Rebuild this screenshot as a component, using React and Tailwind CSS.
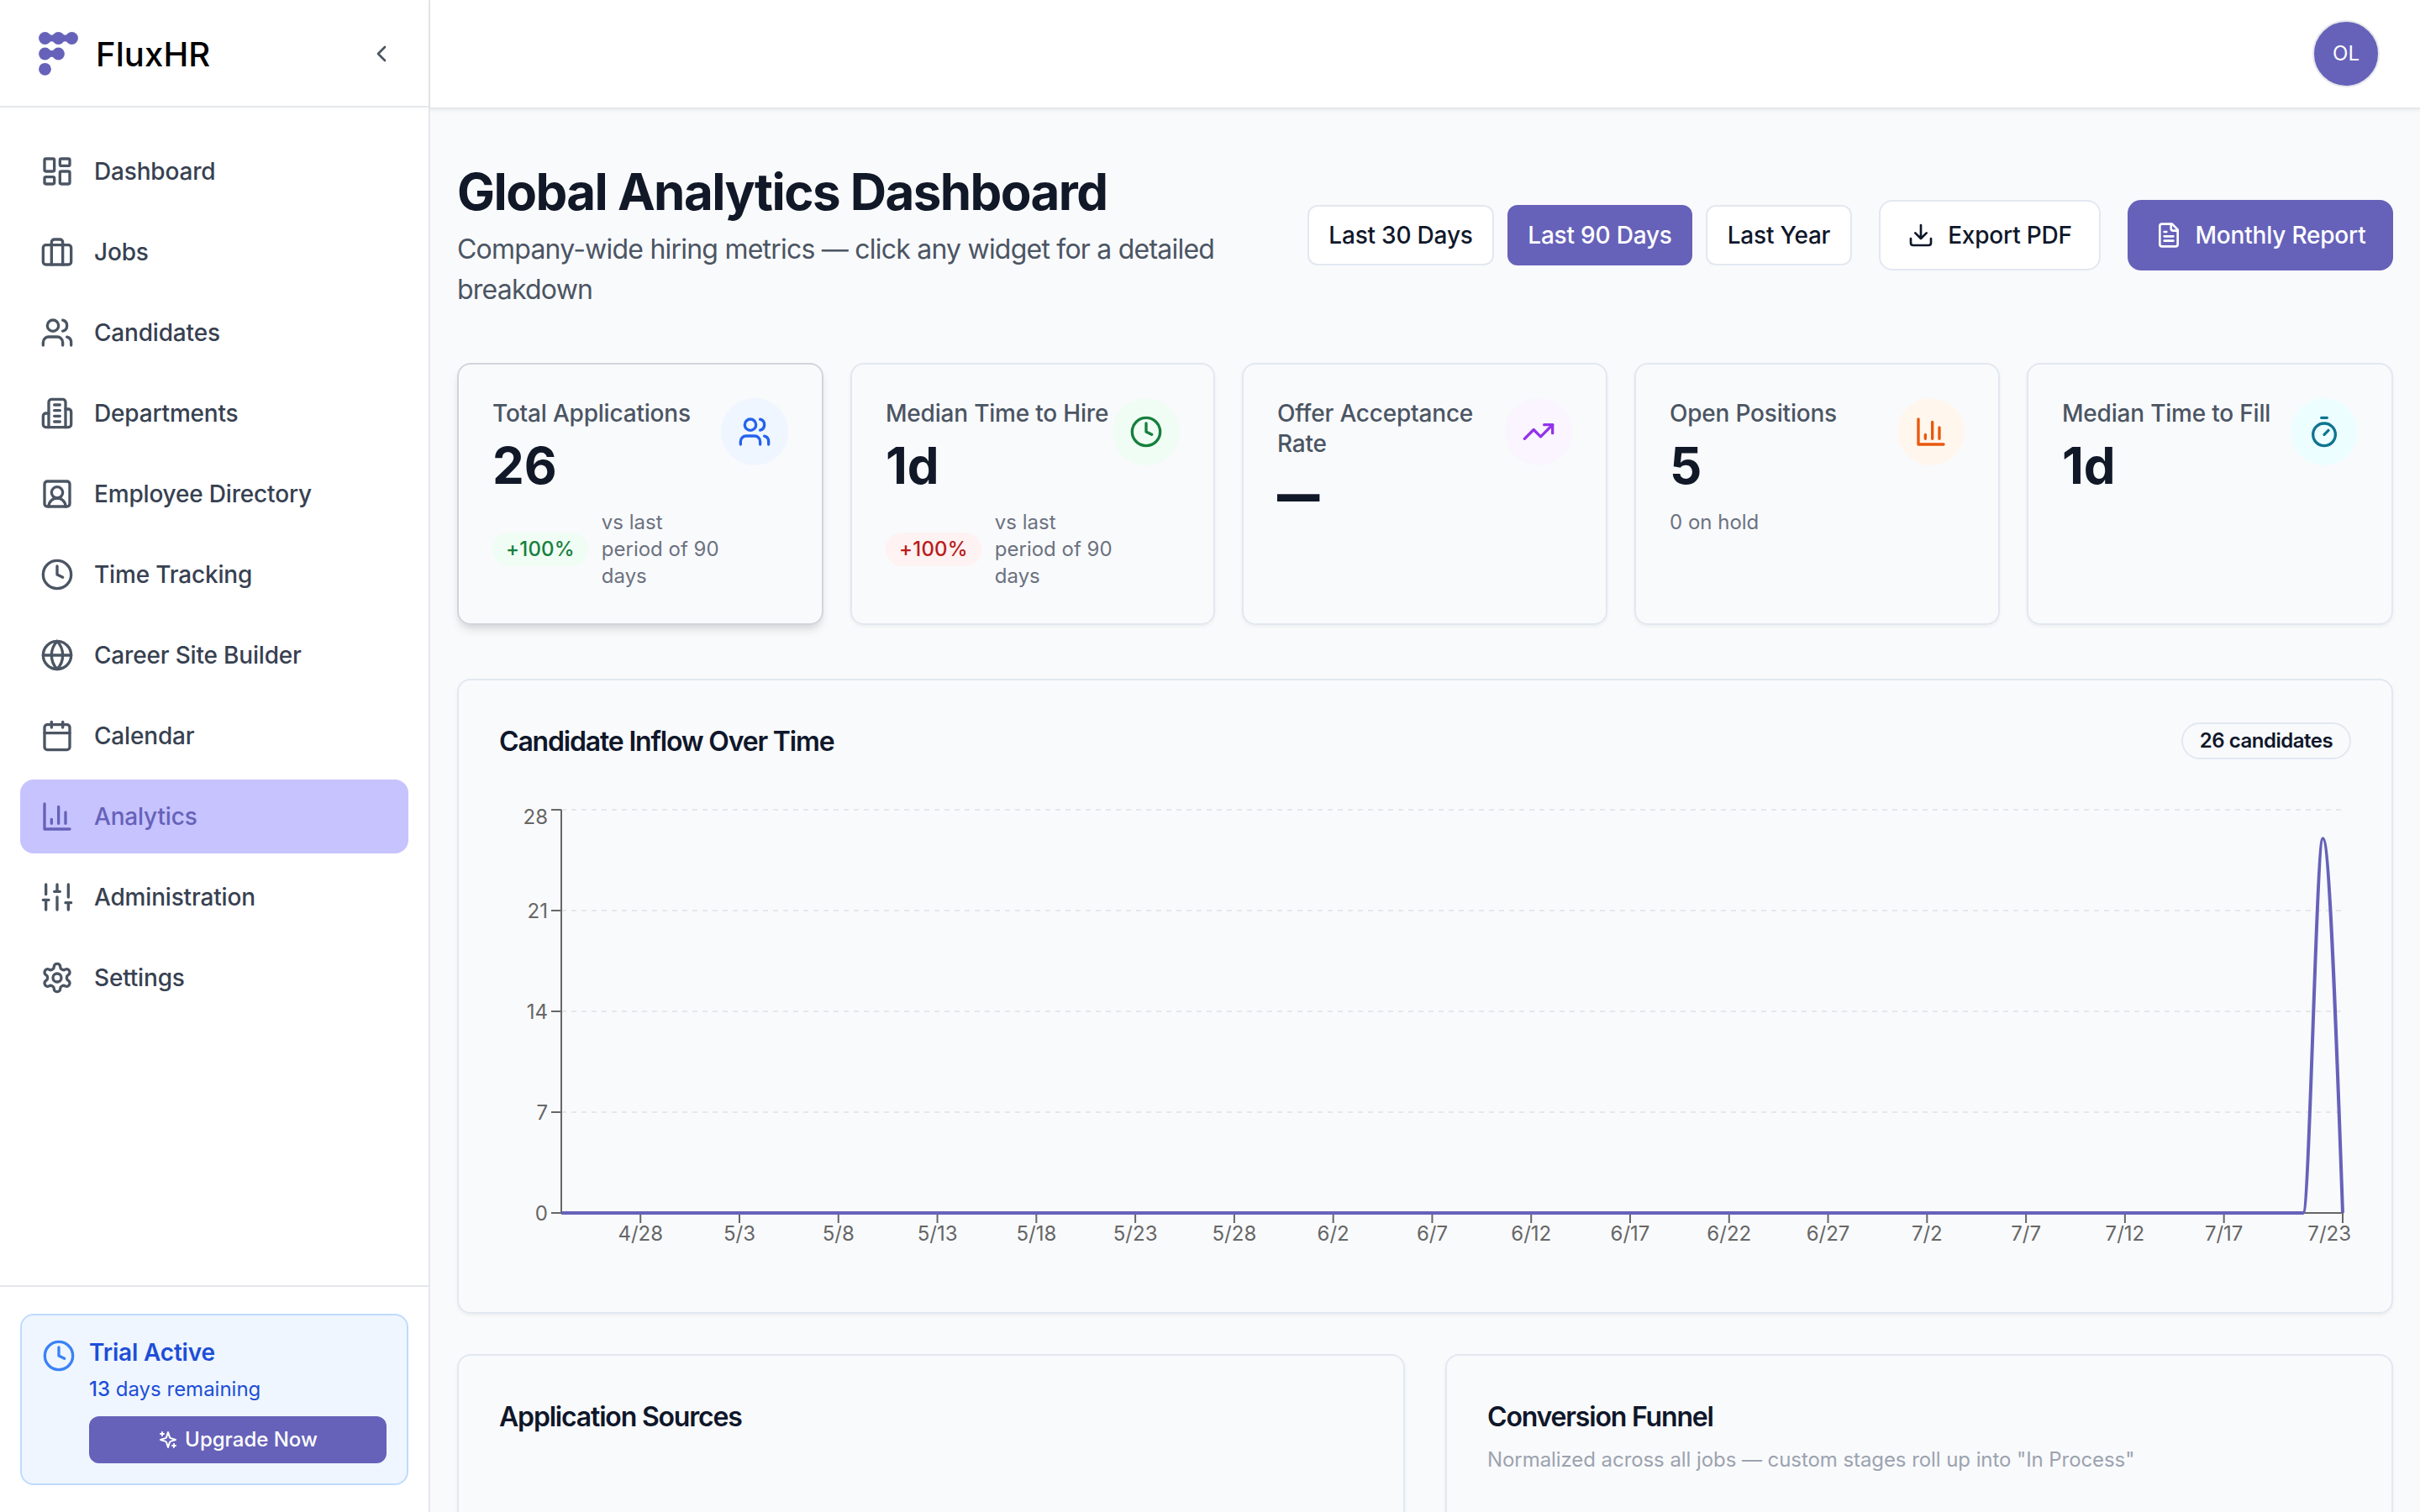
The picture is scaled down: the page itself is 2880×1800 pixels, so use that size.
import React from 'react';
import { LayoutDashboard, Users, Clock, Globe, Calendar, ChevronLeft, TrendingUp, Timer, SquareUserRound } from 'lucide-react';

// Base wrapper for the icons the package draws differently
const Icon = ({ className, children }) => (
    <svg
        viewBox="0 0 24 24"
        fill="none"
        stroke="currentColor"
        strokeWidth="2"
        strokeLinecap="round"
        strokeLinejoin="round"
        className={className}
    >
        {children}
    </svg>
);

const BriefcaseIcon = ({ className }) => (
    <Icon className={className}>
        <rect x="2" y="7" width="20" height="14" rx="2" />
        <path d="M16 21V5a2 2 0 0 0-2-2h-4a2 2 0 0 0-2 2v16" />
    </Icon>
);

const BuildingIcon = ({ className }) => (
    <Icon className={className}>
        <path d="M6 22V4a2 2 0 0 1 2-2h8a2 2 0 0 1 2 2v18Z" />
        <path d="M6 12H4a2 2 0 0 0-2 2v6a2 2 0 0 0 2 2h2" />
        <path d="M18 9h2a2 2 0 0 1 2 2v9a2 2 0 0 1-2 2h-2" />
        <path d="M10 6h4M10 10h4M10 14h4M10 18h4" />
    </Icon>
);

const BarsIcon = ({ className }) => (
    <Icon className={className}>
        <path d="M3 3v18h18" />
        <path d="M18 17V9M13 17V5M8 17v-3" />
    </Icon>
);

const SlidersIcon = ({ className }) => (
    <Icon className={className}>
        <path d="M4 21v-7M4 10V3M12 21v-9M12 8V3M20 21v-5M20 12V3M2 14h4M10 8h4M18 16h4" />
    </Icon>
);

const CogIcon = ({ className }) => (
    <Icon className={className}>
        <path d="M12.22 2h-.44a2 2 0 0 0-2 2v.18a2 2 0 0 1-1 1.73l-.43.25a2 2 0 0 1-2 0l-.15-.08a2 2 0 0 0-2.73.73l-.22.38a2 2 0 0 0 .73 2.73l.15.1a2 2 0 0 1 1 1.72v.51a2 2 0 0 1-1 1.74l-.15.09a2 2 0 0 0-.73 2.73l.22.38a2 2 0 0 0 2.73.73l.15-.08a2 2 0 0 1 2 0l.43.25a2 2 0 0 1 1 1.73V20a2 2 0 0 0 2 2h.44a2 2 0 0 0 2-2v-.18a2 2 0 0 1 1-1.73l.43-.25a2 2 0 0 1 2 0l.15.08a2 2 0 0 0 2.73-.73l.22-.39a2 2 0 0 0-.73-2.73l-.15-.08a2 2 0 0 1-1-1.74v-.5a2 2 0 0 1 1-1.74l.15-.09a2 2 0 0 0 .73-2.73l-.22-.38a2 2 0 0 0-2.73-.73l-.15.08a2 2 0 0 1-2 0l-.43-.25a2 2 0 0 1-1-1.73V4a2 2 0 0 0-2-2z" />
        <circle cx="12" cy="12" r="3" />
    </Icon>
);

const SparklesIcon = ({ className }) => (
    <Icon className={className}>
        <path d="m12 3-1.912 5.813a2 2 0 0 1-1.275 1.275L3 12l5.813 1.912a2 2 0 0 1 1.275 1.275L12 21l1.912-5.813a2 2 0 0 1 1.275-1.275L21 12l-5.813-1.912a2 2 0 0 1-1.275-1.275L12 3Z" />
        <path d="M5 3v4M19 17v4M3 5h4M17 19h4" />
    </Icon>
);

const DownloadIcon = ({ className }) => (
    <Icon className={className}>
        <path d="M21 15v4a2 2 0 0 1-2 2H5a2 2 0 0 1-2-2v-4" />
        <path d="m7 10 5 5 5-5M12 15V3" />
    </Icon>
);

const FileIcon = ({ className }) => (
    <Icon className={className}>
        <path d="M15 2H6a2 2 0 0 0-2 2v16a2 2 0 0 0 2 2h12a2 2 0 0 0 2-2V7Z" />
        <path d="M14 2v4a2 2 0 0 0 2 2h4M10 9H8M16 13H8M16 17H8" />
    </Icon>
);

const Logo = () => (
    <svg viewBox="0 0 48 52" className="h-[52px] w-12 fill-[#6662b9]">
        <circle cx="7.5" cy="7.5" r="7.4" />
        <circle cx="23.5" cy="7.5" r="7.4" />
        <circle cx="39.5" cy="7.5" r="7.4" />
        <path d="M11 1.5Q15.5 6 20 1.5V13.5Q15.5 9 11 13.5ZM27 1.5Q31.5 6 36 1.5V13.5Q31.5 9 27 13.5Z" />
        <circle cx="7.5" cy="26" r="7.4" />
        <circle cx="23.5" cy="26" r="7.4" />
        <path d="M11 20Q15.5 24.5 20 20V32Q15.5 27.5 11 32Z" />
        <circle cx="7.5" cy="44.3" r="7.4" />
    </svg>
);

const NAV_ITEMS = [
    { label: 'Dashboard', icon: LayoutDashboard },
    { label: 'Jobs', icon: BriefcaseIcon },
    { label: 'Candidates', icon: Users },
    { label: 'Departments', icon: BuildingIcon },
    { label: 'Employee Directory', icon: SquareUserRound },
    { label: 'Time Tracking', icon: Clock },
    { label: 'Career Site Builder', icon: Globe },
    { label: 'Calendar', icon: Calendar },
    { label: 'Analytics', icon: BarsIcon, active: true },
    { label: 'Administration', icon: SlidersIcon },
    { label: 'Settings', icon: CogIcon },
];

const STATS = [
    {
        label: 'Total Applications',
        value: '26',
        icon: Users,
        tone: 'bg-[#eff6ff] text-[#2563eb]',
        change: '+100%',
        changeTone: 'bg-[#f0fdf4] text-[#15803d]',
        hovered: true,
    },
    {
        label: 'Median Time to Hire',
        value: '1d',
        icon: Clock,
        tone: 'bg-[#f0fdf4] text-[#15803d]',
        change: '+100%',
        changeTone: 'bg-[#fef2f2] text-[#b91c1c]',
    },
    { label: 'Offer Acceptance Rate', value: null, icon: TrendingUp, tone: 'bg-[#faf5ff] text-[#9333ea]' },
    { label: 'Open Positions', value: '5', icon: BarsIcon, tone: 'bg-[#fff7ed] text-[#ea580c]', note: '0 on hold' },
    { label: 'Median Time to Fill', value: '1d', icon: Timer, tone: 'bg-[#ecfeff] text-[#0e7490]' },
];

const Sidebar = () => (
    <aside className="flex h-full w-[512px] shrink-0 flex-col border-r-2 border-[#e5e7eb] bg-white">
        <div className="flex h-32 shrink-0 items-center justify-between border-b-2 border-[#e5e7eb] pt-0.5 pr-10 pl-[46px]">
            <div className="flex items-center gap-5">
                <Logo />
                <span className="pt-0.5 text-[40px] leading-none font-medium tracking-[0.1px] text-black">FluxHR</span>
            </div>
            <ChevronLeft className="size-8 text-[#4b5563]" />
        </div>
        <nav className="flex flex-1 flex-col gap-2 px-6 pt-8">
            {NAV_ITEMS.map(({ label, icon: NavIcon, active }) => (
                <a
                    key={label}
                    className={`flex h-[88px] items-center gap-6 rounded-2xl px-6 ${active ? 'bg-[#c7c3ff] text-[#6662b9]' : 'text-[#374151]'}`}
                >
                    <NavIcon className={`size-10 ${active ? 'text-[#6662b9]' : 'text-[#4b5563]'}`} />
                    <span className="text-[28px] leading-10 font-medium tracking-[-0.18px]">{label}</span>
                </a>
            ))}
        </nav>
        <div className="border-t-2 border-[#e5e7eb] px-6 py-8">
            <div className="flex items-start gap-4 rounded-2xl border-2 border-[#bfdbfe] bg-[#eff6ff] p-6">
                <Clock className="mt-1 size-10 shrink-0 text-[#3b82f6]" />
                <div className="flex-1">
                    <p className="text-[28px] leading-10 font-semibold tracking-[-0.18px] text-[#1d4ed8]">Trial Active</p>
                    <p className="mt-2 text-2xl text-[#1d4ed8]">
                        <span className="font-medium">13</span> days remaining
                    </p>
                    <button className="mt-4 flex h-14 w-full items-center justify-center gap-2 rounded-xl bg-[#6662b9] text-2xl font-medium text-white">
                        <SparklesIcon className="size-6" />
                        Upgrade Now
                    </button>
                </div>
            </div>
        </div>
    </aside>
);

const StatCard = ({ label, value, icon: StatIcon, tone, change, changeTone, note, hovered }) => (
    <div
        className={`flex items-start justify-between rounded-2xl border-2 p-10 ${
            hovered
                ? 'border-[#d1d5db] shadow-[0_8px_12px_-2px_rgba(0,0,0,0.1),0_4px_8px_-4px_rgba(0,0,0,0.1)]'
                : 'border-[#e2e8f0] shadow-[0_2px_4px_0_rgba(0,0,0,0.05)]'
        }`}
    >
        <div className="min-w-0 flex-1">
            <p className="text-[28px] leading-9 font-medium tracking-[-0.2px] text-[#4b5563]">{label}</p>
            <p className="mt-2 text-6xl leading-[72px] font-bold text-[#111827]">
                {/* No data yet: a shorter, heavier dash */}
                {value ?? <span className="inline-block origin-left -translate-y-0.5 scale-x-[0.84] font-black">—</span>}
            </p>
            {change && (
                <div className="mt-4 flex items-center gap-4">
                    <span className={`rounded-full px-4 py-1 text-2xl font-medium tracking-[0.2px] ${changeTone}`}>{change}</span>
                    <span className="w-[150px] text-2xl whitespace-nowrap text-[#6b7280]">
                        vs last
                        <br />
                        period of 90
                        <br />
                        days
                    </span>
                </div>
            )}
            {note && <p className="mt-4 text-2xl text-[#6b7280]">{note}</p>}
        </div>
        <div className={`flex size-20 shrink-0 items-center justify-center rounded-full ${tone}`}>
            <StatIcon className="size-10" />
        </div>
    </div>
);

// Plot area inside the 2204x560 chart canvas
const PLOT = { left: 74, right: 2194, top: 10, bottom: 490 };
const STEP = (PLOT.right - PLOT.left) / 90;
const Y_TICKS = [0, 7, 14, 21, 28];
const X_TICKS = [
    '4/28', '5/3', '5/8', '5/13', '5/18', '5/23', '5/28', '6/2', '6/7',
    '6/12', '6/17', '6/22', '6/27', '7/2', '7/7', '7/12', '7/17',
];
const xAt = (day) => PLOT.left + day * STEP;
const yAt = (count) => PLOT.bottom - (count / 28) * (PLOT.bottom - PLOT.top);

const InflowChart = () => {
    const peak = yAt(26);
    const curve = [
        `M${xAt(0)},${PLOT.bottom}`,
        `L${xAt(88)},${PLOT.bottom}`,
        `C${xAt(88) + STEP / 3},${PLOT.bottom} ${xAt(89) - STEP / 3},${peak} ${xAt(89)},${peak}`,
        `C${xAt(89) + STEP / 3},${peak} ${xAt(90) - STEP / 3},${(peak + PLOT.bottom) / 2} ${xAt(90)},${PLOT.bottom}`,
    ].join('');

    return (
        <svg width="2204" height="560" viewBox="0 0 2204 560" className="mt-12 block overflow-visible text-2xl">
            {Y_TICKS.map((tick) => (
                <g key={tick}>
                    <line x1={PLOT.left} x2={PLOT.right} y1={yAt(tick)} y2={yAt(tick)} stroke="#e5e7eb" strokeWidth="2" strokeDasharray="6 6" />
                    <line x1={PLOT.left - 12} x2={PLOT.left} y1={yAt(tick)} y2={yAt(tick)} stroke="#666" strokeWidth="2" />
                    <text x={PLOT.left - 16} y={yAt(tick) + (tick === 28 ? 17 : 9)} textAnchor="end" fill="#666">
                        {tick}
                    </text>
                </g>
            ))}
            <path d={`M${PLOT.left},${PLOT.top}V${PLOT.bottom}H${PLOT.right}`} fill="none" stroke="#666" strokeWidth="2" />
            {X_TICKS.map((tick, i) => (
                <g key={tick}>
                    <line x1={xAt(4 + i * 5)} x2={xAt(4 + i * 5)} y1={PLOT.bottom} y2={PLOT.bottom + 12} stroke="#666" strokeWidth="2" />
                    <text x={xAt(4 + i * 5)} y={PLOT.bottom + 33} textAnchor="middle" fill="#666">
                        {tick}
                    </text>
                </g>
            ))}
            <line x1={PLOT.right} x2={PLOT.right} y1={PLOT.bottom} y2={PLOT.bottom + 12} stroke="#666" strokeWidth="2" />
            <text x="2204" y={PLOT.bottom + 33} textAnchor="end" fill="#666">
                7/23
            </text>
            <path d={curve} fill="none" stroke="#6662b9" strokeWidth="4" />
        </svg>
    );
};

const Card = ({ className = '', children }) => (
    <section className={`rounded-2xl border-2 border-[#e2e8f0] p-12 shadow-[0_2px_4px_0_rgba(0,0,0,0.05)] ${className}`}>
        {children}
    </section>
);

const CardTitle = ({ children }) => (
    <h2 className="h-12 pt-px text-[32px] leading-[48px] font-semibold tracking-[-1.18px] text-[#0f172a]">{children}</h2>
);

const App = () => (
    <div className="flex h-[1800px] w-[2880px] overflow-hidden bg-[#f9fafc] font-['Inter',sans-serif]">
        <Sidebar />
        <div className="flex min-w-0 flex-1 flex-col">
            <header className="flex h-[130px] shrink-0 items-center justify-end border-b-2 border-[#e5e7eb] bg-white px-12 shadow-[0_2px_4px_0_rgba(0,0,0,0.05)]">
                <div className="flex size-20 items-center justify-center rounded-full border-2 border-[#e5e7eb] bg-[#6662b9] text-2xl text-white">
                    OL
                </div>
            </header>
            <main className="min-h-0 flex-1 px-8 pt-[62px]">
                <div className="flex h-[176px] items-center justify-between">
                    <div>
                        <h1 className="text-6xl leading-[72px] font-bold tracking-[-1.56px] text-[#111827]">Global Analytics Dashboard</h1>
                        <p className="mt-[9px] w-[930px] text-[32px] leading-[48px] tracking-[-0.78px] text-[#4b5563]">
                            Company-wide hiring metrics — click any widget for a detailed breakdown
                        </p>
                    </div>
                    <div className="flex items-center gap-8 text-[28px] font-medium tracking-[-0.2px] text-[#0f172a]">
                        <div className="flex gap-4">
                            <button className="h-[72px] w-[222px] rounded-xl border-2 border-[#e2e8f0] bg-white whitespace-nowrap">Last 30 Days</button>
                            <button className="h-[72px] w-[220px] rounded-xl bg-[#6662b9] whitespace-nowrap text-white">Last 90 Days</button>
                            <button className="h-[72px] w-[174px] rounded-xl border-2 border-[#e2e8f0] bg-white whitespace-nowrap">Last Year</button>
                        </div>
                        <button className="flex h-[84px] w-[264px] items-center justify-center gap-4 rounded-2xl border-2 border-[#e2e8f0] bg-white whitespace-nowrap">
                            <DownloadIcon className="size-8" />
                            Export PDF
                        </button>
                        <button className="flex h-[84px] w-[316px] items-center justify-center gap-4 rounded-2xl bg-[#6662b9] whitespace-nowrap text-white">
                            <FileIcon className="size-8" />
                            Monthly Report
                        </button>
                    </div>
                </div>

                <div className="mt-16 grid h-[312px] grid-cols-[436px_434px_435px_435px_436px] gap-8">
                    {STATS.map((stat) => (
                        <StatCard key={stat.label} {...stat} />
                    ))}
                </div>

                <Card className="mt-16">
                    <div className="flex items-center justify-between">
                        <CardTitle>Candidate Inflow Over Time</CardTitle>
                        <span className="flex h-11 w-[202px] items-center justify-center rounded-full border-2 border-[#e2e8f0] text-2xl font-semibold tracking-[-0.48px] whitespace-nowrap text-[#0f172a]">
                            26 candidates
                        </span>
                    </div>
                    <InflowChart />
                </Card>

                <div className="mt-12 grid h-[800px] grid-cols-2 gap-12">
                    <Card>
                        <CardTitle>Application Sources</CardTitle>
                    </Card>
                    <Card>
                        <CardTitle>Conversion Funnel</CardTitle>
                        <p className="mt-3 text-2xl tracking-[-0.07px] text-[#9ca3af]">
                            Normalized across all jobs — custom stages roll up into "In Process"
                        </p>
                    </Card>
                </div>
            </main>
        </div>
    </div>
);

export default App;
